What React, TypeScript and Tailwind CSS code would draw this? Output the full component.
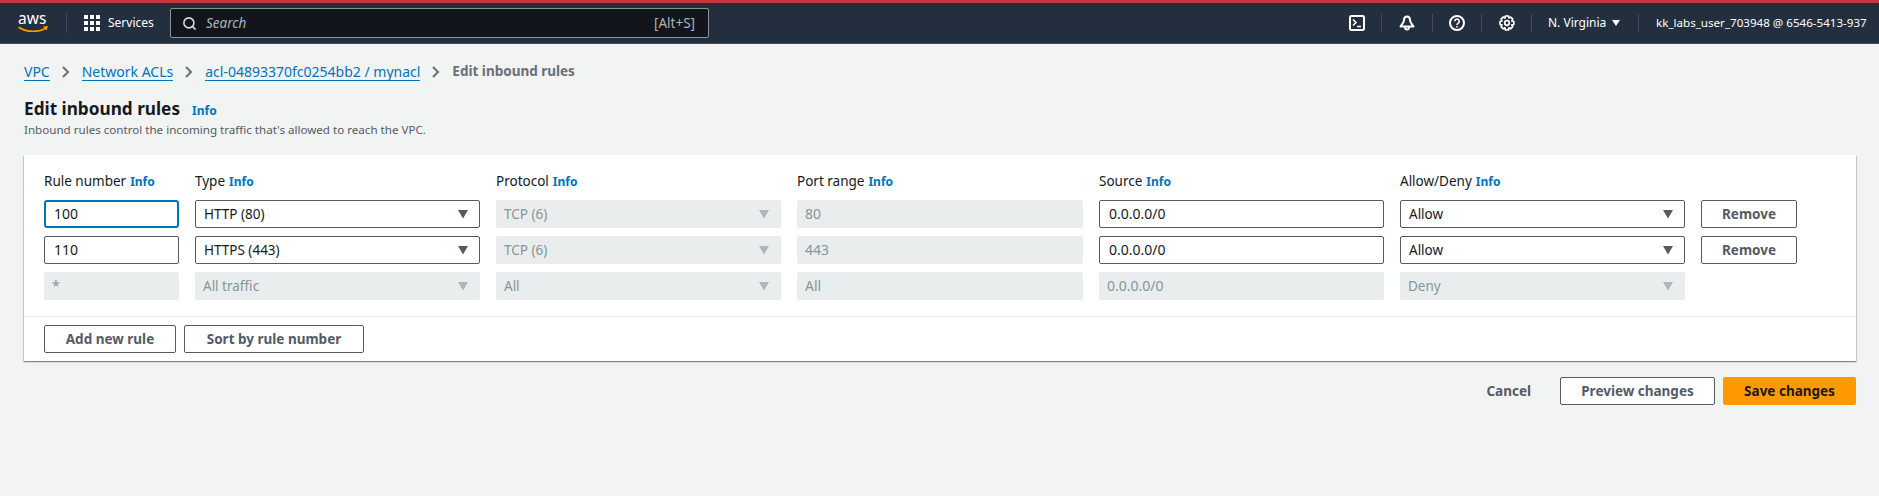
import React from 'react';
import { Search } from 'lucide-react';

const InfoLink = () => <span className="text-[12px] font-bold text-[#0073bb]">Info</span>;

const Caret = ({ disabled }: { disabled?: boolean }) => (
  <svg width="12" height="12" viewBox="0 0 12 12" className="shrink-0">
    <path d="M1 2h10L6 10.500z" fill={disabled ? '#aab7b8' : '#545b64'} />
  </svg>
);

const TextInput = ({ value, focused }: { value: string; focused?: boolean }) => (
  <div
    className={`flex h-7 items-center bg-white px-2 text-sm text-[#16191f] ${
      focused ? 'rounded-[3px] border-2 border-[#0073bb] pl-[8px]' : 'rounded-[2px] border border-[#545b64] pl-[9px]'
    }`}
  >
    {value}
  </div>
);

const DisabledInput = ({ value }: { value: string }) => (
  <div className="flex h-7 items-center rounded-[2px] bg-[#eaeded] px-2 text-sm text-[#879596]">{value}</div>
);

const SelectBox = ({ value }: { value: string }) => (
  <div className="flex h-7 items-center justify-between rounded-[2px] border border-[#545b64] bg-white pl-2 pr-[10px] text-[13.5px] text-[#16191f]">
    {value}
    <Caret />
  </div>
);

const DisabledSelect = ({ value }: { value: string }) => (
  <div className="flex h-7 items-center justify-between rounded-[2px] bg-[#eaeded] pl-2 pr-[11px] text-[13.5px] text-[#879596]">
    {value}
    <Caret disabled />
  </div>
);

const Button = ({ children, className = '' }: { children: React.ReactNode; className?: string }) => (
  <div
    className={`flex h-7 items-center justify-center rounded-[2px] border border-[#545b64] bg-white text-[13.5px] font-bold text-[#545b64] ${className}`}
  >
    {children}
  </div>
);

const Label = ({ text }: { text: string }) => (
  <div className="flex h-[18px] items-baseline gap-1 text-[13.5px] leading-[15px] text-[#16191f]">
    {text} <InfoLink />
  </div>
);

const Divider = () => <div className="h-[18px] w-px bg-[#414d5c]" />;

const Crumb = ({ text }: { text: string }) => (
  <span className="border-b border-[#0073bb] leading-[17px] text-[#0073bb]">{text}</span>
);

const Chevron = () => (
  <svg width="10" height="14" viewBox="0 0 10 14" fill="none" stroke="#687078" strokeWidth="2">
    <path d="M2 2l5 5-5 5" />
  </svg>
);

const AwsLogo = () => (
  <svg width="34" height="36" viewBox="0 -6 34 36" className="shrink-0">
    <text x="0" y="13" fontSize="15.500" fontFamily="Noto Sans, sans-serif" fill="#fff">aws</text>
    <path d="M1 16.500c8 5 20 5 27 .5" fill="none" stroke="#ff9900" strokeWidth="1.500" strokeLinecap="round" />
    <path d="M25 15.500l5-.5-1.500 4.500z" fill="#ff9900" />
  </svg>
);

export default function App() {
  return (
    <div className="h-[496px] w-[1879px] overflow-hidden bg-[#f2f3f3] font-['Noto_Sans',sans-serif]">
      {/* top nav */}
      <header className="flex h-[44px] items-center border-t-[3px] border-b border-t-[#c7363d] border-b-[#414d5c] bg-[#232f3e] pl-[18px] text-white">
        <AwsLogo />
        <div className="ml-[14px] h-5 w-px shrink-0 bg-[#414d5c]" />
        <div className="ml-[17px] grid shrink-0 grid-cols-3 gap-[2px]">
          {Array.from({ length: 9 }).map((_, i) => (
            <div key={i} className="h-1 w-1 bg-white" />
          ))}
        </div>
        <span className="ml-[8px] w-[45px] shrink-0 whitespace-nowrap text-xs">Services</span>
        <div className="ml-[17px] flex h-[30px] w-[539px] shrink-0 items-center rounded-[2px] border border-[#879596] bg-[#12161c] pl-[11px] pr-[13px] text-[13.5px] text-[#aab7b8]">
          <Search size={15} strokeWidth={2.500} className="text-[#d5dbdb]" />
          <span className="ml-[9px] italic">Search</span>
          <span className="ml-auto">[Alt+S]</span>
        </div>
        <div className="ml-[640px] flex shrink-0 items-center">
          <svg width="16" height="16" viewBox="0 0 16 16" fill="none" stroke="#fff" strokeWidth="2">
            <rect x="1" y="1" width="14" height="14" rx="1.500" />
            <path d="M4 4.500l3 3-3 3M8 11.500h4" strokeWidth="1.500" />
          </svg>
          <div className="ml-4"><Divider /></div>
          <svg className="ml-[17px]" width="16" height="16" viewBox="0 0 16 16" fill="none" stroke="#fff" strokeWidth="2">
            <path d="M8 1.500c-2 0-3 1.500-3 3.500 0 3-2.500 4.500-3.500 6.500h13c-1-2-3.500-3.500-3.500-6.500 0-2-1-3.500-3-3.500zM6 12a2 2.500 0 0 0 4 0" strokeLinejoin="round" />
          </svg>
          <div className="ml-[17px]"><Divider /></div>
          <svg className="ml-[16px]" width="16" height="16" viewBox="0 0 16 16" fill="none" stroke="#fff" strokeWidth="2">
            <circle cx="8" cy="8" r="7" />
            <path d="M5.800 6.200a2.200 2.200 0 1 1 3.400 1.900c-.8.500-1.200.9-1.200 1.900M8 11v1.500" strokeWidth="1.600" />
          </svg>
          <div className="ml-[16px]"><Divider /></div>
          <svg className="ml-[17px]" width="16" height="16" viewBox="0 0 16 16" fill="none" stroke="#fff" strokeWidth="1.700">
            <circle cx="8" cy="8" r="2.300" />
            <path d="M6.500 1h3l.4 2 1.800-.9 2.100 2.100-1 1.800 2 .5v3l-2 .4.900 1.800-2.100 2.100-1.800-1-.4 2.200h-3l-.4-2.200-1.800 1-2.100-2.100.9-1.800-2-.4v-3l2-.5-1-1.800 2.100-2.100 1.800.9z" strokeLinejoin="round" />
          </svg>
          <div className="ml-4"><Divider /></div>
          <span className="ml-4 w-[57px] whitespace-nowrap text-xs">N. Virginia</span>
          <svg className="ml-[7px]" width="8" height="8" viewBox="0 0 8 8"><path d="M0 1h8L4 7z" fill="#fff" /></svg>
          <div className="ml-[18px]"><Divider /></div>
          <span className="ml-[17px] whitespace-nowrap text-[11.6px]">kk_labs_user_703948 @ 6546-5413-937</span>
        </div>
      </header>

      <main className="pl-[24px] pr-[23px]">
        {/* breadcrumbs */}
        <nav className="mt-[18px] flex h-[19px] items-center gap-[11px] pt-[1px] text-sm">
          <Crumb text="VPC" />
          <Chevron />
          <Crumb text="Network ACLs" />
          <Chevron />
          <Crumb text="acl-04893370fc0254bb2 / mynacl" />
          <Chevron />
          <span className="text-[13.5px] font-bold text-[#687078]">Edit inbound rules</span>
        </nav>

        <div className="mt-[15px] flex items-baseline gap-3">
          <h1 className="text-[17.2px] font-bold leading-[25px] text-[#16191f]">Edit inbound rules</h1>
          <InfoLink />
        </div>
        <p className="text-[11.6px] leading-[18px] text-[#545b64]">
          Inbound rules control the incoming traffic that's allowed to reach the VPC.
        </p>

        {/* rules card */}
        <section className="mt-[16px] h-[206px] bg-white shadow-[0_1px_1px_0_rgba(0,28,36,0.3),1px_1px_1px_0_rgba(0,28,36,0.15),-1px_1px_1px_0_rgba(0,28,36,0.15)]">
          <div className="grid grid-cols-[135px_285px_285px_286px_285px_285px_96px] gap-x-4 gap-y-2 px-5 pt-[19px]">
            <Label text="Rule number" />
            <Label text="Type" />
            <Label text="Protocol" />
            <Label text="Port range" />
            <Label text="Source" />
            <Label text="Allow/Deny" />
            <div />

            <TextInput value="100" focused />
            <SelectBox value="HTTP (80)" />
            <DisabledSelect value="TCP (6)" />
            <DisabledInput value="80" />
            <TextInput value="0.0.0.0/0" />
            <SelectBox value="Allow" />
            <Button>Remove</Button>

            <TextInput value="110" />
            <SelectBox value="HTTPS (443)" />
            <DisabledSelect value="TCP (6)" />
            <DisabledInput value="443" />
            <TextInput value="0.0.0.0/0" />
            <SelectBox value="Allow" />
            <Button>Remove</Button>

            <DisabledInput value="*" />
            <DisabledSelect value="All traffic" />
            <DisabledSelect value="All" />
            <DisabledInput value="All" />
            <DisabledInput value="0.0.0.0/0" />
            <DisabledSelect value="Deny" />
          </div>
          <div className="mt-4 flex gap-2 border-t border-[#eaeded] px-5 pt-2">
            <Button className="w-[132px]">Add new rule</Button>
            <Button className="w-[180px]">Sort by rule number</Button>
          </div>
        </section>

        {/* page actions */}
        <div className="mt-4 flex items-center justify-end">
          <span className="mr-[29px] text-[13.5px] font-bold text-[#545b64]">Cancel</span>
          <Button className="w-[155px]">Preview changes</Button>
          <div className="ml-2 flex h-7 w-[133px] items-center justify-center rounded-[2px] bg-[#ff9900] text-[13.5px] font-bold text-[#16191f]">
            Save changes
          </div>
        </div>
      </main>
    </div>
  );
}
